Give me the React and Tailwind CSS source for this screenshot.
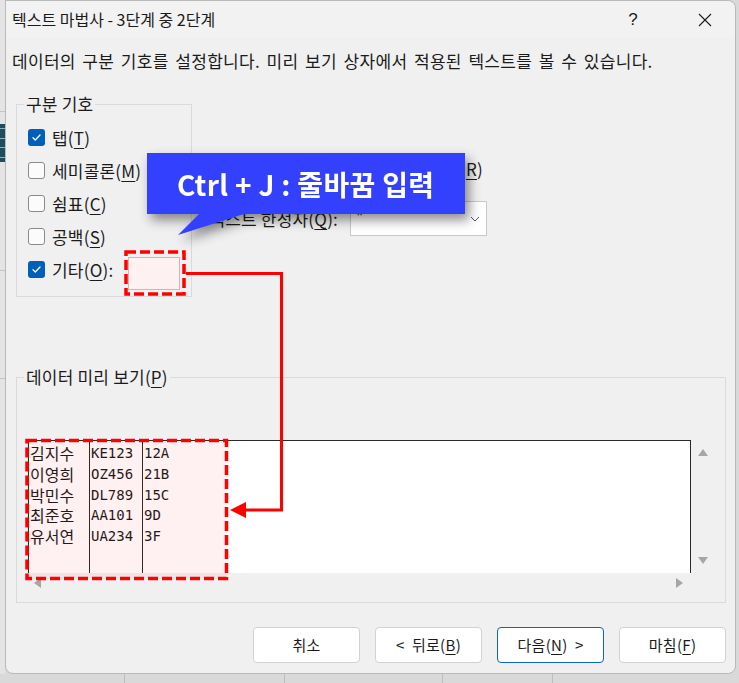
import React from "react";

const Check = ({ checked }) =>
  checked ? (
    <span className="w-[17px] h-[17px] rounded-[3px] bg-[#005fb8] flex items-center justify-center shrink-0">
      <svg width="11" height="9" viewBox="0 0 11 9">
        <path d="M2 4.8 L4.3 7 L9 2" fill="none" stroke="white" strokeWidth="1.3" strokeLinecap="round" strokeLinejoin="round" />
      </svg>
    </span>
  ) : (
    <span className="w-[17px] h-[17px] rounded-[3px] border border-[#8a8a8a] bg-[#fbfbfb] shrink-0" />
  );

const U = ({ children }) => <span className="underline underline-offset-[3px] decoration-1">{children}</span>;

const Row = ({ checked, children, extra }) => (
  <div className="h-[33px] flex items-center">
    <Check checked={checked} />
    <span className="ml-[7px] whitespace-nowrap">{children}</span>
    {extra}
  </div>
);

const Btn = ({ children, primary }) => (
  <div
    className={
      "w-[107px] h-[36px] rounded-[4px] bg-white flex items-center justify-center text-[15px] " +
      (primary ? "border-[1.5px] border-[#0a66c2]" : "border border-[#d2d2d2]")
    }
  >
    {children}
  </div>
);

export default function App() {
  const names = ["김지수", "이영희", "박민수", "최준호", "유서연"];
  const codes = ["KE123", "OZ456", "DL789", "AA101", "UA234"];
  const seats = ["12A", "21B", "15C", "9D", "3F"];
  return (
    <div className="w-[739px] h-[683px] bg-[#d9d9d9] relative overflow-hidden flex flex-col font-['Noto_Sans_CJK_KR',sans-serif] text-[#1b1b1b]">
      <div className="flex flex-1 min-h-0">
        {/* background sheet strip */}
        <div className="w-[5px] flex flex-col bg-[#e4e4e4]">
          <div className="h-[112px] border-b border-[#c4c4c4]" />
          <div className="h-[12px]" />
          <div className="h-[38px] bg-[#1f4d5e] flex flex-col justify-around">
            <div className="h-px bg-[#8fb0bd]" />
            <div className="h-px bg-[#8fb0bd]" />
            <div className="h-px bg-[#8fb0bd]" />
            <div className="h-px bg-[#8fb0bd]" />
          </div>
          <div className="h-[109px] border-b border-[#c4c4c4]" />
          <div className="h-[108px] border-b border-[#c4c4c4]" />
        </div>

        {/* dialog */}
        <div className="flex-1 flex flex-col bg-[#f0f0f0] border border-[#b9b9b9] rounded-tr-[8px] rounded-b-[8px] text-[17px] tracking-[0.2px]">
          {/* title bar */}
          <div className="h-[37px] flex items-center pl-[6px] bg-[#f2f2f2] rounded-tr-[8px]">
            <span className="text-[16px] tracking-normal -mt-[2px]">텍스트 마법사 - 3단계 중 2단계</span>
            <div className="ml-auto flex items-center pr-[7px]">
              <div className="w-[46px] h-[37px] flex items-center justify-center text-[17px] font-['Liberation_Sans',sans-serif]">?</div>
              <div className="w-[26px]" />
              <div className="w-[46px] h-[37px] flex items-center justify-center">
                <svg width="14" height="14" viewBox="0 0 14 14">
                  <path d="M1 1 L13 13 M13 1 L1 13" stroke="#1b1b1b" strokeWidth="1.1" />
                </svg>
              </div>
            </div>
          </div>

          {/* description */}
          <div className="mt-[12px] pl-[6px] h-[22px] leading-[22px] whitespace-nowrap tracking-[0.3px] [word-spacing:2.5px]">
            데이터의 구분 기호를 설정합니다. 미리 보기 상자에서 적용된 텍스트를 볼 수 있습니다.
          </div>

          {/* options row */}
          <div className="mt-[22px] flex items-start">
            <fieldset className="ml-[10px] w-[176px] h-[203px] border border-[#dadada] pl-[11px] pr-[11px] pt-[7px]">
              <legend className="-ml-[4px] px-[2px] leading-[20px]">구분 기호</legend>
              <Row checked>
                탭(<U>T</U>)
              </Row>
              <Row>
                세미콜론(<U>M</U>)
              </Row>
              <Row>
                쉼표(<U>C</U>)
              </Row>
              <Row>
                공백(<U>S</U>)
              </Row>
              <Row
                checked
                extra={<div className="ml-auto mt-[7px] w-[52px] h-[33px] bg-[#fdf1f1] border border-[#cbb7b7]" />}
              >
                기타(<U>O</U>):
              </Row>
            </fieldset>

            <div className="ml-[15px] mt-[64px] flex flex-col">
              <div className="w-[276px] h-[22px] flex items-center justify-end">
                <Check />
                <span className="ml-[7px] whitespace-nowrap">
                  연속된 구분 기호를 하나로 처리(<U>R</U>)
                </span>
              </div>
              <div className="mt-[21px] flex items-center">
                <span className="w-[143px] whitespace-nowrap flex justify-end pr-[12px]">
                  텍스트 한정자(<U>Q</U>):
                </span>
                <div className="w-[137px] h-[35px] bg-white border border-[#c8c8c8] flex items-center">
                  <span className="ml-[6px] text-[15px] font-['Liberation_Sans',sans-serif] self-start mt-[4px]">"</span>
                  <div className="ml-auto w-[22px] h-full flex items-center justify-center">
                    <svg width="10" height="6" viewBox="0 0 10 6">
                      <path d="M1 1 L5 5 L9 1" fill="none" stroke="#555" strokeWidth="1" />
                    </svg>
                  </div>
                </div>
              </div>
            </div>
          </div>

          {/* preview group */}
          <fieldset className="mt-[70px] ml-[10px] w-[710px] border border-[#dadada] pt-[53px] pl-[11px] pr-[11px] pb-[9px]">
            <legend className="-ml-[4px] px-[2px] leading-[20px]">
              데이터 미리 보기(<U>P</U>)
            </legend>
            <div className="grid grid-cols-[663px_23px] grid-rows-[133px_20px]">
              <div className="bg-white border-t border-l border-r border-[#2a2a2a] flex tracking-normal">
                <div className="w-[60px] pt-[2px] pl-[1px] text-[16px] leading-[20.75px] font-['Noto_Sans_CJK_KR',sans-serif]">
                  {names.map((n) => (
                    <div key={n}>{n}</div>
                  ))}
                </div>
                <div className="w-[53px] border-l border-[#2a2a2a] pt-[2px] pl-[1px] text-[14px] leading-[20.75px] font-['DejaVu_Sans_Mono',monospace]">
                  {codes.map((n) => (
                    <div key={n}>{n}</div>
                  ))}
                </div>
                <div className="w-[60px] border-l border-[#2a2a2a] pt-[2px] pl-[1px] text-[14px] leading-[20.75px] font-['DejaVu_Sans_Mono',monospace]">
                  {seats.map((n) => (
                    <div key={n}>{n}</div>
                  ))}
                </div>
              </div>
              <div className="flex flex-col items-center justify-between pt-[9px] pb-[9px]">
                <svg width="10" height="7" viewBox="0 0 10 7">
                  <path d="M5 0 L10 7 L0 7 Z" fill="#a6a6a6" />
                </svg>
                <svg width="10" height="7" viewBox="0 0 10 7">
                  <path d="M0 0 L10 0 L5 7 Z" fill="#a6a6a6" />
                </svg>
              </div>
              <div className="flex items-center justify-between pl-[6px] pr-[8px]">
                <svg width="7" height="10" viewBox="0 0 7 10">
                  <path d="M7 0 L7 10 L0 5 Z" fill="#a6a6a6" />
                </svg>
                <svg width="7" height="10" viewBox="0 0 7 10">
                  <path d="M0 0 L7 5 L0 10 Z" fill="#a6a6a6" />
                </svg>
              </div>
              <div />
            </div>
          </fieldset>

          {/* buttons */}
          <div className="mt-[24px] flex justify-end gap-[15px] pr-[9px] tracking-[0.3px]">
            <Btn>취소</Btn>
            <Btn>
              &lt;&nbsp; 뒤로(<U>B</U>)
            </Btn>
            <Btn primary>
              다음(<U>N</U>)&nbsp; &gt;
            </Btn>
            <Btn>
              마침(<U>F</U>)
            </Btn>
          </div>
        </div>
        <div className="w-[3px] bg-[#d9d9d9]" />
      </div>

      {/* bottom sheet strip */}
      <div className="h-[9px] flex bg-[#d9d9d9]">
        <div className="w-[125px] border-r border-[#bdbdbd]" />
        <div className="w-[160px] border-r border-[#bdbdbd]" />
        <div className="w-[158px] border-r border-[#bdbdbd]" />
        <div className="w-[110px] border-r border-[#bdbdbd]" />
        <div className="flex-1" />
      </div>

      {/* annotation overlay */}
      <svg className="absolute left-0 top-0 pointer-events-none" width="739" height="683" viewBox="0 0 739 683">
        <rect x="27" y="440.5" width="199.5" height="138" fill="rgba(255,0,0,0.055)" />
        <rect x="27" y="440.5" width="199.5" height="138" fill="none" stroke="#ff0000" strokeWidth="3.5" strokeDasharray="10 4" />
        <rect x="126" y="252" width="58" height="42" fill="none" stroke="#ff0000" strokeWidth="3.5" strokeDasharray="10 4" />
        <path d="M186 273.5 H281.5 V510 H244" fill="none" stroke="#ff0000" strokeWidth="3" />
        <path d="M230 510 L246 502 L246 518 Z" fill="#ff0000" />
      </svg>

      {/* callout */}
      <div className="absolute left-[147px] top-[153px] w-[318px] h-[82px] [filter:drop-shadow(4px_6px_6px_rgba(0,0,0,0.45))]">
        <div className="w-[318px] h-[61px] bg-[#3341ff] flex items-center pl-[30px] text-white text-[28px] font-bold tracking-[0.3px] whitespace-nowrap">
          Ctrl + J : 줄바꿈 입력
        </div>
        <svg width="120" height="22" viewBox="0 0 120 22" className="block -mt-px">
          <path d="M53 0 L100 0 L31 22 Z" fill="#3341ff" />
        </svg>
      </div>
    </div>
  );
}
